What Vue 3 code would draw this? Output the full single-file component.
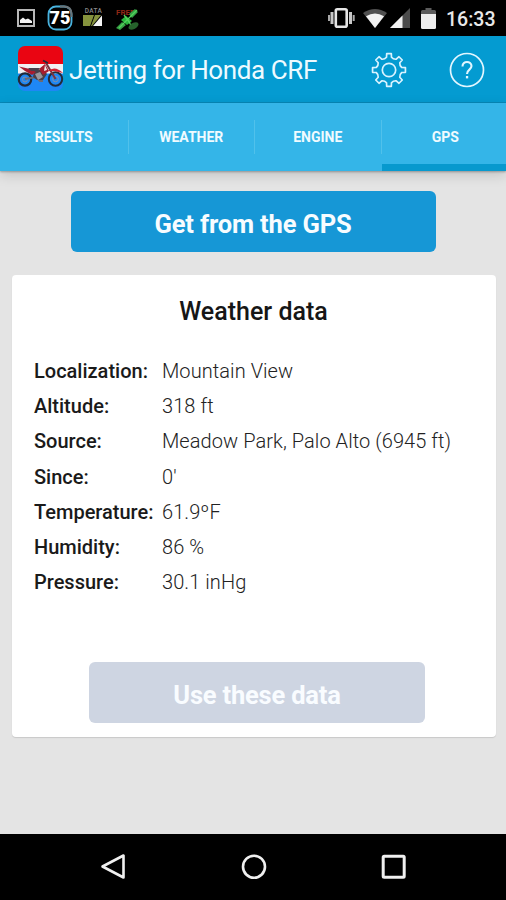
<script setup>
import { ref } from "vue";

const tabs = ["RESULTS", "WEATHER", "ENGINE", "GPS"];
const activeTab = ref("GPS");

const weather = [
  { label: "Localization:", value: "Mountain View" },
  { label: "Altitude:", value: "318 ft" },
  { label: "Source:", value: "Meadow Park, Palo Alto (6945 ft)" },
  { label: "Since:", value: "0'" },
  { label: "Temperature:", value: "61.9ºF" },
  { label: "Humidity:", value: "86 %" },
  { label: "Pressure:", value: "30.1 inHg" },
];

// outline of the settings gear, 8 teeth
const gearPoint = (radius, degrees) => {
  const a = (degrees * Math.PI) / 180;
  return `${(18 + radius * Math.sin(a)).toFixed(2)} ${(18 - radius * Math.cos(a)).toFixed(2)}`;
};

const gearPath = () => {
  let d = "";
  for (let i = 0; i < 8; i++) {
    const c = i * 45;
    d += `${i === 0 ? "M" : "L"}${gearPoint(13, c - 11)} `;
    d += `L${gearPoint(16.6, c - 8)} L${gearPoint(16.6, c + 8)} L${gearPoint(13, c + 11)} `;
    d += `Q${gearPoint(11.4, c + 22.5)} ${gearPoint(13, c + 34)} `;
  }
  return d + "Z";
};
</script>

<template>
  <div class="screen">
    <div class="status">
      <svg class="ic-photo" width="18" height="18" viewBox="0 0 18 18">
        <rect x="1" y="1" width="16" height="16" fill="#000" stroke="#b8b8b8" stroke-width="2" />
        <path d="M3 14V11L6 8.500L8.500 10.500L11 9.500L15 12V14Z" fill="#f4f4f4" />
      </svg>
      <svg class="ic-level" width="26" height="26" viewBox="0 0 26 26">
        <rect x="1.500" y="1.500" width="23" height="23" rx="7.500" fill="#000" stroke="#49b3de" stroke-width="1.800" />
        <path d="M13 1.500H17Q24.500 1.500 24.500 9V12" fill="none" stroke="#6c7478" stroke-width="2" />
        <text x="13" y="19.300" text-anchor="middle" font-size="18" font-weight="900" fill="#fff">75</text>
      </svg>
      <svg class="ic-data" width="23" height="22" viewBox="0 0 23 22">
        <text x="11.500" y="6.500" text-anchor="middle" font-size="6.500" font-weight="500" letter-spacing=".3" fill="#8a8a8a">DATA</text>
        <path d="M1 9H12L8 20H1Z" fill="#85933d" />
        <path d="M13 9H19L10 20H9Z" fill="#85933d" />
        <path d="M20 9.500V20H11Z" fill="#f6f6f6" />
      </svg>
      <svg class="ic-sat" width="26" height="26" viewBox="0 0 26 26">
        <text x="1" y="9" font-size="8" font-weight="700" fill="#8e2715">FREE</text>
        <path d="M1 22L7 16L11 19L5 24ZM14 8L20 3L23 6L17 12Z" fill="#36a044" />
        <path d="M6 14L11 10L17 15L12 19Z" fill="#29b53d" />
        <path d="M4 22L22 4M9 9L15 17M14 16L17 21" stroke="#52d25d" stroke-width="1.300" />
        <ellipse cx="18.500" cy="20" rx="5.500" ry="3" transform="rotate(-28 18.500 20)" fill="#26632c" />
      </svg>
      <div class="spacer"></div>
      <svg class="ic-vibrate" width="28" height="22" viewBox="0 0 28 22">
        <rect x="8.800" y="2.200" width="10.900" height="17.600" rx="1.500" fill="none" stroke="#e6e6e6" stroke-width="2.600" />
        <path d="M5 5V17M23.500 5V17" stroke="#c8c8c8" stroke-width="3" />
        <path d="M2 8V14M26.700 8V14" stroke="#a8a8a8" stroke-width="2" />
      </svg>
      <svg class="ic-wifi" width="24" height="19" viewBox="0 0 24 19">
        <path d="M0 4Q12 -4 24 4L12 19Z" fill="#505050" />
        <path d="M3 7.300Q12 1.500 21 7.300L12 19Z" fill="#f2f2f2" />
      </svg>
      <svg class="ic-signal" width="20" height="20" viewBox="0 0 20 20">
        <path d="M20 0V20H0Z" fill="#4c4c4c" />
        <path d="M12.500 7.500V20H0Z" fill="#f2f2f2" />
      </svg>
      <svg class="ic-battery" width="15" height="21" viewBox="0 0 15 21">
        <path d="M4.500 0H10.500V2H13.500Q15 2 15 3.500V8H0V3.500Q0 2 1.500 2H4.500Z" fill="#5c5c5c" />
        <path d="M0 6H15V19.500Q15 21 13.500 21H1.500Q0 21 0 19.500Z" fill="#eee" />
      </svg>
      <span class="clock">16:33</span>
    </div>

    <header class="bar">
      <svg class="logo" width="48" height="48" viewBox="0 0 48 48">
        <defs>
          <clipPath id="tile"><rect x="2" y="1" width="45" height="45" rx="7" /></clipPath>
        </defs>
        <g clip-path="url(#tile)">
          <rect width="48" height="20" fill="#ea0512" />
          <rect y="19" width="48" height="10" fill="#f1f1f3" />
          <rect y="28.500" width="48" height="20" fill="#1e87f5" />
        </g>
        <g fill="none" stroke="#232b39">
          <circle cx="9" cy="34.500" r="6.200" stroke-width="2.200" />
          <circle cx="39.500" cy="34" r="6.700" stroke-width="2" />
          <circle cx="9" cy="34.500" r="2.500" stroke="#8291a8" />
          <circle cx="39.500" cy="34" r="2.800" stroke="#8291a8" />
          <path d="M9 34L20 32L24 36H27" stroke="#6d6a72" stroke-width="2" />
          <path d="M30 18L39.500 34" stroke="#7b3340" stroke-width="2" />
          <path d="M27 15.500L32 18" stroke-width="1.800" />
        </g>
        <path d="M18 26L27 24L31 29L27 35H21L17 32Z" fill="#4a3f48" />
        <path d="M19 29L24 27L27 32L22 35Z" fill="#9a969c" />
        <path d="M3 21.500L14 24L20 27L16 30L9 26ZM23 24L29 19L33 26L27 30Z" fill="#a81c2f" />
        <path d="M32 26Q39 20 47 28L38 26Z" fill="#d02132" />
        <path d="M12 23H24L22 26H15Z" fill="#49404c" />
        <path d="M29 20L31 25L28 26Z" fill="#eee" />
      </svg>
      <h1>Jetting for Honda CRF</h1>
      <svg class="gear" width="36" height="36" viewBox="0 0 36 36">
        <path :d="gearPath()" fill="none" stroke="#d9f3ff" stroke-width="1.700" stroke-linejoin="round" />
        <circle cx="18" cy="18" r="6.700" fill="none" stroke="#d9f3ff" stroke-width="1.700" />
      </svg>
      <svg class="help" width="36" height="36" viewBox="0 0 36 36">
        <circle cx="18" cy="18" r="16.500" fill="none" stroke="#e2f6ff" stroke-width="1.700" />
        <path d="M13.500 14.500C13.500 8.300 22.500 8.700 22.500 14C22.500 17.800 18 17.500 18 22" fill="none" stroke="#e2f6ff" stroke-width="2.100" />
        <rect x="16.900" y="24" width="2.300" height="2.400" fill="#e2f6ff" />
      </svg>
    </header>

    <nav class="tabs">
      <button
        v-for="tab in tabs"
        :key="tab"
        class="tab"
        :class="{ active: tab === activeTab }"
        @click="activeTab = tab"
      >
        <span>{{ tab }}</span>
      </button>
    </nav>

    <main>
      <button class="get">Get from the GPS</button>
      <section class="card">
        <h2>Weather data</h2>
        <dl>
          <div v-for="row in weather" :key="row.label" class="row">
            <dt>{{ row.label }}</dt>
            <dd>{{ row.value }}</dd>
          </div>
        </dl>
        <button class="use" disabled>Use these data</button>
      </section>
    </main>

    <footer>
      <svg width="28" height="30" viewBox="0 0 28 30">
        <path d="M24.500 3.500V25.500L3.500 14.500Z" fill="none" stroke="#f0f0f0" stroke-width="2.600" stroke-linejoin="round" />
      </svg>
      <svg width="28" height="30" viewBox="0 0 28 30">
        <circle cx="14" cy="14.700" r="11" fill="none" stroke="#f0f0f0" stroke-width="2.600" />
      </svg>
      <svg width="28" height="30" viewBox="0 0 28 30">
        <rect x="3.200" y="4.300" width="21" height="21" rx="1" fill="none" stroke="#f0f0f0" stroke-width="3" />
      </svg>
    </footer>
  </div>
</template>

<style>
body {
  margin: 0;
  background: #e4e4e4;
}
</style>

<style scoped>
.screen {
  width: 506px;
  height: 900px;
  display: flex;
  flex-direction: column;
  overflow: hidden;
  background: #e4e4e4;
  font-family: Roboto, "Liberation Sans", sans-serif;
}

svg {
  display: block;
  flex: none;
}

button {
  border: 0;
  margin: 0;
  padding: 0;
  font-family: inherit;
}

.status {
  height: 36px;
  flex: none;
  display: flex;
  align-items: center;
  box-sizing: border-box;
  padding: 0 11px 0 17px;
  background: #000;
}

.ic-level {
  margin-left: 12px;
}

.ic-data {
  margin: 0 10px 3px 9px;
}

.ic-sat {
  margin-top: 1px;
}

.spacer {
  flex: 1;
}

.ic-wifi {
  margin-left: 8px;
}

.ic-signal {
  margin: 0 11px 0 3px;
}

.clock {
  width: 49px;
  margin: 2px 0 0 10px;
  color: #e8e8e8;
  font-size: 19.5px;
  font-weight: 500;
  white-space: nowrap;
}

.bar {
  height: 66.500px;
  flex: none;
  display: flex;
  align-items: center;
  box-sizing: border-box;
  padding: 0 21px 0 16px;
  background: #049bd1;
  border-bottom: 1.500px solid #078abb;
}

.logo {
  margin-top: 1px;
}

h1 {
  flex: 1;
  margin: 3px 0 0 5px;
  color: #eefaff;
  font-size: 26px;
  font-weight: 400;
  letter-spacing: -0.4px;
  white-space: nowrap;
}

.gear {
  margin-right: 42px;
}

.gear,
.help {
  margin-top: 2px;
}

.tabs {
  height: 68px;
  flex: none;
  display: grid;
  grid-template-columns: 128.5px 126.5px 126.5px 1fr;
  background: #34b5e8;
  box-shadow: 0 1px 2px rgba(0, 0, 0, 0.28), 0 4px 12px rgba(0, 0, 0, 0.15);
  z-index: 1;
}

.tab {
  display: flex;
  align-items: center;
  box-sizing: border-box;
  padding-top: 2px;
  border-bottom: 2px solid transparent;
  background: none;
  color: #f0fbff;
  font-size: 14px;
  font-weight: 700;
}

.tab span {
  flex: 1;
  line-height: 34px;
  border-right: 1px solid #50c1eb;
}

.tab:last-child span {
  padding-left: 3px;
  border-right: 0;
}

.tab.active {
  padding-top: 7.500px;
  border-bottom: 7.500px solid #0799ce;
}

main {
  flex: 1;
  display: flex;
  flex-direction: column;
  align-items: center;
  padding-top: 20px;
}

.get {
  width: 365px;
  height: 61px;
  padding-top: 5px;
  border-radius: 6px;
  background: #1697d6;
  color: #f7fcff;
  font-size: 25.5px;
  font-weight: 700;
  letter-spacing: -0.15px;
}

.card {
  width: 484px;
  height: 462px;
  display: flex;
  flex-direction: column;
  align-items: center;
  box-sizing: border-box;
  margin: 23.500px 0 0 1px;
  padding: 21px 0 14px;
  border-radius: 4px;
  background: #fff;
  box-shadow: 0 1px 1px rgba(0, 0, 0, 0.12);
}

h2 {
  margin: 0;
  line-height: 32px;
  color: #161616;
  font-size: 25px;
  font-weight: 500;
}

dl {
  width: 100%;
  flex: 1;
  box-sizing: border-box;
  margin: 26px 0 0;
  padding-left: 22.500px;
}

.row {
  display: grid;
  grid-template-columns: 128px 1fr;
  line-height: 35.200px;
  font-size: 20px;
  white-space: nowrap;
}

dt {
  color: #1a1a1a;
  font-weight: 500;
}

dd {
  margin: 0;
  color: #222;
  font-weight: 300;
  letter-spacing: 0.07px;
}

.use {
  width: 336px;
  height: 61px;
  margin-left: 7px;
  padding-top: 5px;
  border-radius: 6px;
  background: #ced5e2;
  color: #f9fcff;
  font-size: 25.5px;
  font-weight: 700;
  letter-spacing: -0.2px;
}

footer {
  height: 66.500px;
  flex: none;
  display: flex;
  align-items: center;
  justify-content: space-between;
  box-sizing: border-box;
  padding: 0 98px 0 99px;
  background: #000;
}
</style>
